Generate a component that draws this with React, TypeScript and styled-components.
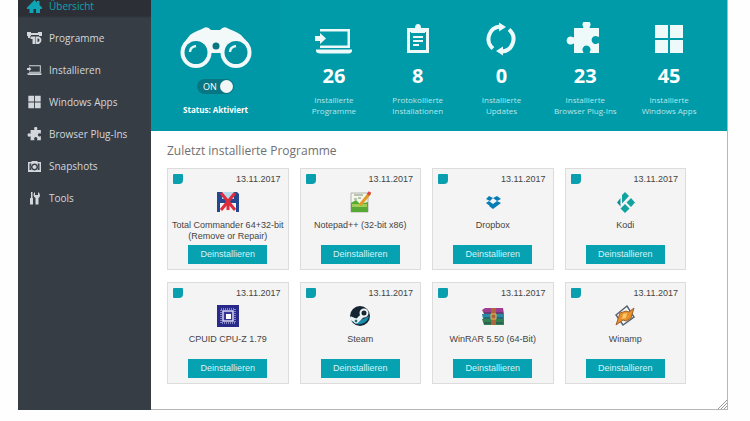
import React from "react";
import styled, { createGlobalStyle, css } from "styled-components";

const GlobalStyle = createGlobalStyle`
  *, *::before, *::after { box-sizing: border-box; }
  body {
    margin: 0;
    background: #fefefe;
    font-family: "Open Sans", "Noto Sans", sans-serif;
    overflow: hidden;
  }
`;

const AppWindow = styled.div`
  display: flex;
  margin: 0 22px 0 18px;
  background: #fff;
`;

const Sidebar = styled.nav`
  flex: 0 0 133px;
  background: #363d45;
`;

const NavList = styled.ul`
  margin: -10px 0 0;
  padding: 0;
  list-style: none;
`;

const NavLink = styled.a<{ $active?: boolean }>`
  display: flex;
  align-items: center;
  gap: 7px;
  height: 32px;
  padding-left: 9px;
  color: #d3d7dc;
  font-size: 10px;
  line-height: 14px;
  text-decoration: none;
  ${(p) =>
    p.$active &&
    css`
      color: #0fa3b3;
      background: linear-gradient(#2c3036 26px, #363d45 28px);
    `}
`;

const NavIcon = styled.svg`
  flex: none;
  width: 15px;
  height: 14px;
  fill: currentColor;
`;

const Main = styled.main`
  position: relative;
  flex: 1;
  min-width: 0;
  border: solid #b4b6b8;
  border-width: 0 1px 1px 0;
`;

const Hero = styled.header`
  display: flex;
  height: 131px;
  color: #fff;
  background: #009ba9;
`;

const StatusPanel = styled.section`
  display: flex;
  flex: 0 0 129px;
  flex-direction: column;
  align-items: center;
  padding-top: 26px;
  background: #0098a7;
`;

const Binoculars = styled.svg`
  width: 72px;
  height: 42px;
`;

const Toggle = styled.label`
  display: flex;
  align-items: center;
  justify-content: space-between;
  width: 37px;
  height: 15px;
  margin-top: 11px;
  padding: 0 1px 0 6px;
  border-radius: 8px;
  background: #087783;
  font-size: 9px;
  line-height: 15px;
`;

const ToggleKnob = styled.input`
  width: 13px;
  height: 13px;
  margin: 0;
  border-radius: 50%;
  appearance: none;
  background: #f3f6f7;
`;

const StatusText = styled.strong`
  margin-top: 9px;
  font-size: 8px;
  line-height: 14px;
`;

const Stats = styled.ul`
  display: grid;
  flex: 1;
  grid-template-columns: repeat(5, 1fr);
  margin: 0;
  padding: 22px 16px 0 12px;
  list-style: none;
`;

const Stat = styled.li`
  display: flex;
  flex-direction: column;
  align-items: center;
`;

const StatIcon = styled.svg`
  width: 38px;
  height: 34px;
  fill: #eefafa;
`;

const StatValue = styled.strong`
  margin-top: 6px;
  font-size: 20px;
  line-height: 28px;
`;

const StatLabel = styled.span`
  margin-top: 4px;
  color: #b9e6ea;
  font-size: 8px;
  line-height: 11px;
  text-align: center;
  white-space: pre-line;
`;

const Recent = styled.section`
  padding: 10px 41px 25px 16px;
`;

const Heading = styled.h2`
  margin: 0 0 8px;
  color: #707070;
  font-size: 12px;
  font-weight: 400;
  line-height: 19px;
`;

const CardGrid = styled.div`
  display: grid;
  grid-template-columns: repeat(4, minmax(0, 1fr));
  gap: 12px 11px;
`;

const Card = styled.article`
  display: flex;
  flex-direction: column;
  align-items: center;
  height: 102px;
  padding: 5px;
  border: 1px solid #dcdcdc;
  background: #f4f4f4;
  font-family: "Liberation Sans", Arial, sans-serif;
`;

const CardTop = styled.div`
  display: flex;
  align-self: stretch;
  justify-content: space-between;
  padding-right: 2px;
  color: #444;
  font-size: 9px;
  line-height: 11px;
`;

const Marker = styled.span`
  width: 10px;
  height: 10px;
  border-radius: 1px 1px 4px 1px;
  background: #0a9fae;
`;

const AppIcon = styled.svg`
  flex: none;
  width: 24px;
  height: 24px;
  margin-top: 5px;
`;

const AppName = styled.h3`
  flex: 1;
  margin: 6px 0 0;
  color: #444;
  font-size: 9px;
  font-weight: 400;
  line-height: 11px;
  text-align: center;
  white-space: pre;
`;

const UninstallButton = styled.button`
  flex: none;
  width: 79px;
  height: 19px;
  padding: 0;
  border: 0;
  color: #d8f3f5;
  background: #06a2b1;
  font: 9px/19px "Liberation Sans", Arial, sans-serif;
`;

const ResizeGrip = styled.svg`
  position: absolute;
  right: 0;
  bottom: 0;
  width: 9px;
  height: 9px;
`;

const Puzzle = () => (
  <path d="M6 6h8.500q1.500 0 .5-1.500a4 4 0 1 1 7 0q-1 1.500 .5 1.500H31v8q0 1.500-1.500.5a4 4 0 1 0 0 7q1.500-1 1.500 .5V31h-8.500q-1.500 0-.5-1.500a4 4 0 1 0-7 0q1 1.500-.5 1.500H6v-8.500q0-1.500-1.500-.5a4 4 0 1 1 0-7q1.500 1 1.500-.5z" />
);

const Tiles = () => (
  <path d="M0 0h13v13H0zM15 0h13v13H15zM0 15h13v13H0zM15 15h13v13H15z" />
);

const Laptop = () => (
  <>
    <path d="M5 1h30v19h-2.500V3.500H5zM5 17.500h28V20H5zM1 21.500h36v2q-1 2-3 2H5q-3 0-4-2z" />
    <path d="M0 8h5V5l6 5.500-6 5.500v-3H0z" />
  </>
);

type NavEntry = { label: string; box: string; art: React.ReactNode; active?: boolean };

const navEntries: NavEntry[] = [
  {
    label: "Übersicht",
    box: "0 0 15 14",
    active: true,
    art: <path d="M7.500 1l2.500 2.500V2h2.500v4L15 8.500V10h-2v4h-4v-4H6.500v4h-4v-4H0V8.500z" />,
  },
  {
    label: "Programme",
    box: "0 0 15 14",
    art: (
      <>
        <path d="M0 1h4v1h7V1h4v4h-3V4H4v1H3v2H1V5H0z" />
        <path fillRule="evenodd" d="M3.500 5.500H8V13H5.500V8h-2zM8.500 5.500H12q2.500 1 2.500 3.500T12 13H8.500zM10.500 7.500v3.500q2 0 2-2t-2-1.500z" />
      </>
    ),
  },
  { label: "Installieren", box: "0 -4 38 34", art: <Laptop /> },
  { label: "Windows Apps", box: "-3 -1 34 30", art: <Tiles /> },
  { label: "Browser Plug-Ins", box: "-1 -1 33 34", art: <Puzzle /> },
  {
    label: "Snapshots",
    box: "0 0 15 14",
    art: (
      <path
        fillRule="evenodd"
        d="M1 3h3l1-1h5l1 1h3v10H1zM2.500 4.500V11h2Q3 8 4.500 4.500zM10.500 4.500Q12 8 10.500 11h2V4.500zM7.500 4.500a3.500 3.500 0 1 0 .01 0zM7.500 6a2 2 0 1 1-.01 0z"
      />
    ),
  },
  {
    label: "Tools",
    box: "0 0 15 14",
    art: <path d="M4 1h1.500v6H6v6.500H3V7h1zM8 1v3h3V1q2 1 2 3.500Q13 6 11.500 7v6.500h-3V7Q6.500 6 6.500 4T8 1z" />,
  },
];

type StatEntry = { value: number; label: string; box: string; art: React.ReactNode };

const statEntries: StatEntry[] = [
  { value: 26, label: "Installierte\nProgramme", box: "0 -6 38 34", art: <Laptop /> },
  {
    value: 8,
    label: "Protokollierte\nInstallationen",
    box: "-8 -2 38 34",
    art: (
      <>
        <path fillRule="evenodd" d="M0 4h22v25H0zM3 8v18h16V8z" />
        <path d="M4 4h4q0-4 3-4t3 4h4v5H4zM6 12h10v2H6zM6 16h10v2H6zM6 20h6v2H6z" />
      </>
    ),
  },
  {
    value: 0,
    label: "Installierte\nUpdates",
    box: "-5 -2 38 34",
    art: (
      <>
        <path d="M6 24.500A12.500 12.500 0 0 1 13 2.500M22 5.500A12.500 12.500 0 0 1 15 27.500" fill="none" stroke="#eefafa" strokeWidth="4" />
        <path d="M12-1.500l7 4.500-7 4.500zM16 22.500l-7 4.500 7 4.500z" />
      </>
    ),
  },
  { value: 23, label: "Installierte\nBrowser Plug-Ins", box: "-2 0 38 34", art: <Puzzle /> },
  { value: 45, label: "Installierte\nWindows Apps", box: "-5 -3 38 34", art: <Tiles /> },
];

type Program = { name: string; art: React.ReactNode };

const programs: Program[] = [
  {
    name: "Total Commander 64+32-bit\n(Remove or Repair)",
    art: (
      <>
        <path fill="#25478f" d="M1 2h20l2 2v18H1z" />
        <path fill="#b8d9ed" d="M6 2h12v7H6z" />
        <path fill="#f3f3f3" d="M4 13h16v9H4z" />
        <path d="M5 3l14 17M19 3L5 20M12 12v8" stroke="#dd2c3b" strokeWidth="3" />
      </>
    ),
  },
  {
    name: "Notepad++ (32-bit x86)",
    art: (
      <>
        <path fill="#f4f6e9" stroke="#afb5ac" d="M3 3h17v19H3z" />
        <path fill="#55a934" d="M3 13l5-3 4 4 8-2v10H3z" />
        <path fill="#a2cd54" d="M4 14h15v3H4z" />
        <path d="M6 9h3M10 8h3M6 5h9" stroke="#7c927b" />
        <path d="M12 15L22 3" stroke="#e39a25" strokeWidth="3" />
        <path d="M20 5l2-3" stroke="#dc4640" strokeWidth="3" />
      </>
    ),
  },
  {
    name: "Dropbox",
    art: <path fill="#087db5" d="M8 6l4 2-3 3-4-2zM16 6l4 3-4 2-4-3zM8 11l4 3-3 2-4-3zM16 11l4 2-4 3-4-2zM8 16l4-2 4 2-4 3z" />,
  },
  {
    name: "Kodi",
    art: (
      <>
        <path fill="#12a3a0" d="M12 2l4 4-7 7.500V5zM18 8l4 4.500-4 4.500-4.500-4.500zM12 14l4.500 4.500L12 23l-4.500-4.500z" />
        <path fill="#168b99" d="M7.500 8v8.500L4 12.500z" />
      </>
    ),
  },
  {
    name: "CPUID CPU-Z 1.79",
    art: (
      <>
        <path fill="#29298a" d="M1 1h22v22H1z" />
        <path fill="none" stroke="#8384c6" strokeWidth="2" strokeDasharray="1 1" d="M5 5h14v14H5z" />
        <path fill="#373697" stroke="#d4d5f5" strokeWidth="1.500" d="M7 7h10v10H7z" />
        <path fill="#fff" d="M10 10h5v5h-5z" />
      </>
    ),
  },
  {
    name: "Steam",
    art: (
      <>
        <circle cx="12" cy="12" r="10" fill="#162331" />
        <path fill="#178ba7" d="M3 16q8 2 18-4a10 10 0 0 1-18 4z" />
        <path d="M2 14l7 3 7-7" fill="none" stroke="#e8f0f3" strokeWidth="4" />
        <circle cx="16" cy="9" r="3.500" fill="#182633" stroke="#edf4f5" strokeWidth="2" />
        <circle cx="8" cy="17" r="2" fill="#27677a" stroke="#fff" />
      </>
    ),
  },
  {
    name: "WinRAR 5.50 (64-Bit)",
    art: (
      <>
        <path fill="#a03d91" d="M1 6l3-2h18l1 6H3z" />
        <path fill="#258ca3" d="M1 10h22v5H2z" />
        <path fill="#32834f" d="M1 15h22v6H3z" />
        <path d="M3 9h19M3 14h19M3 19h19" stroke="#284158" />
        <path fill="#ae653b" d="M10 4h5v17h-5z" />
        <path fill="none" stroke="#e1bc57" d="M10 10h5v5h-5z" />
      </>
    ),
  },
  {
    name: "Winamp",
    art: (
      <>
        <path fill="#fafafa" stroke="#57616d" strokeWidth="1.500" d="M3 11L14 2l7 11-11 8z" />
        <path fill="#e99029" stroke="#9c6230" d="M7 9l6-2 3 1 5-4-3 10-5 3-3-1-7 5z" />
        <path fill="#ffc66a" d="M10 10l4-1-1 5-4 1z" />
      </>
    ),
  },
];

export default function App() {
  return (
    <>
      <GlobalStyle />
      <AppWindow>
        <Sidebar>
          <NavList>
            {navEntries.map((entry) => (
              <li key={entry.label}>
                <NavLink href="#" $active={entry.active} aria-current={entry.active ? "page" : undefined}>
                  <NavIcon viewBox={entry.box} aria-hidden="true">{entry.art}</NavIcon>
                  {entry.label}
                </NavLink>
              </li>
            ))}
          </NavList>
        </Sidebar>
        <Main>
          <Hero>
            <StatusPanel>
              <Binoculars viewBox="0 0 72 42" aria-hidden="true">
                <path
                  fill="#f3f8f8"
                  d="M3 18L10 9q4-3 12-6 5-4 9 1h9q4-5 9-1 8 3 12 6l8 9v9L51 31 42 27H30L20 31 3 27z"
                />
                <circle cx="16" cy="26.500" r="15.500" fill="#f3f8f8" />
                <circle cx="56" cy="26.500" r="15.500" fill="#f3f8f8" />
                <circle cx="16" cy="26.500" r="11.500" fill="#0092a1" />
                <circle cx="56" cy="26.500" r="11.500" fill="#0092a1" />
                <circle cx="36" cy="20" r="3.500" fill="#087783" />
                <path d="M10 26q0-5 6-6M50 26q0-5 6-6" fill="none" stroke="#e5f5f5" strokeWidth="2.500" />
              </Binoculars>
              <Toggle>
                ON
                <ToggleKnob type="checkbox" role="switch" defaultChecked />
              </Toggle>
              <StatusText>Status: Aktiviert</StatusText>
            </StatusPanel>
            <Stats>
              {statEntries.map((stat) => (
                <Stat key={stat.label}>
                  <StatIcon viewBox={stat.box} aria-hidden="true">{stat.art}</StatIcon>
                  <StatValue>{stat.value}</StatValue>
                  <StatLabel>{stat.label}</StatLabel>
                </Stat>
              ))}
            </Stats>
          </Hero>
          <Recent>
            <Heading>Zuletzt installierte Programme</Heading>
            <CardGrid>
              {programs.map((program) => (
                <Card key={program.name}>
                  <CardTop>
                    <Marker />
                    <time dateTime="2017-11-13">13.11.2017</time>
                  </CardTop>
                  <AppIcon viewBox="0 0 24 24" aria-hidden="true">{program.art}</AppIcon>
                  <AppName>{program.name}</AppName>
                  <UninstallButton type="button">Deinstallieren</UninstallButton>
                </Card>
              ))}
            </CardGrid>
          </Recent>
          <ResizeGrip viewBox="0 0 9 9" aria-hidden="true">
            <path d="M0 9l9-9M3 9l6-6M6 9l3-3" stroke="#999" />
          </ResizeGrip>
        </Main>
      </AppWindow>
    </>
  );
}
